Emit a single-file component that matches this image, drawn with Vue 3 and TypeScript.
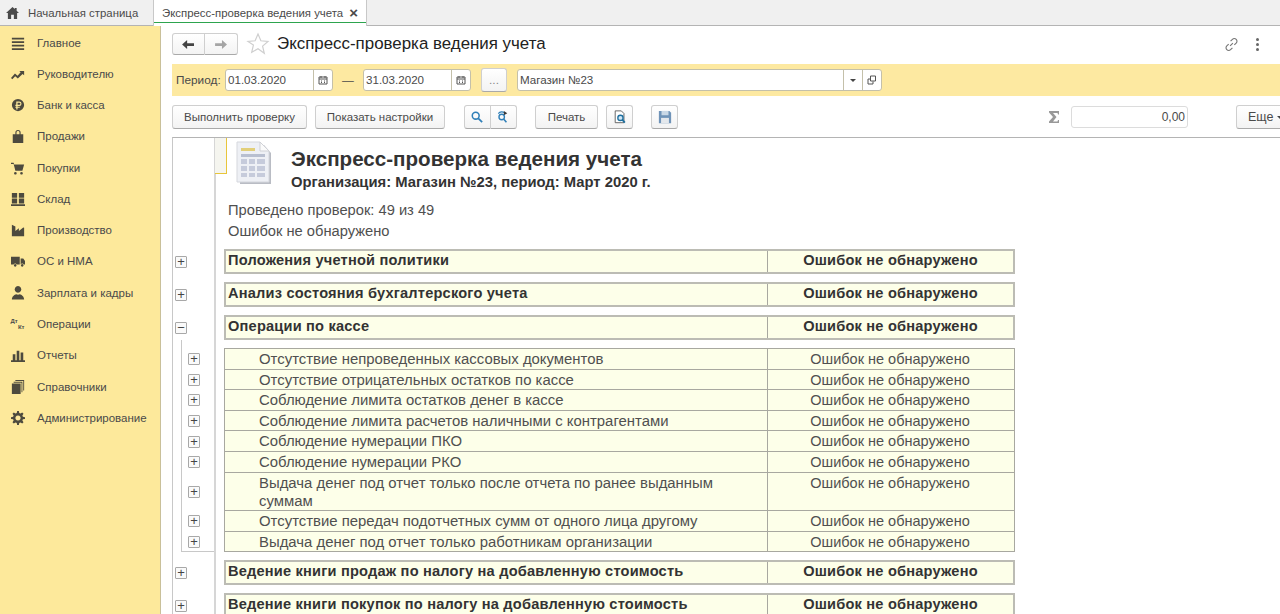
<script setup lang="ts">
interface NavItem {
  label: string
  icon: string
}

const navItems: NavItem[] = [
  { label: 'Главное', icon: 'M1 2h14v2H1zM1 6h14v2H1zM1 10h14v2H1zM1 14h14v2H1z' },
  { label: 'Руководителю', icon: 'M0 12.500l4.500-5 3 2.500 3.500-4-1.500-1.500H15v5l-1.800-1.600L7.800 13l-3-2.500-3.300 3.500z' },
  { label: 'Банк и касса', icon: 'M8 1a7 7 0 1 0 0 14A7 7 0 0 0 8 1zM6 4h3.500a2.500 2.500 0 0 1 0 5H7.500v1H10v1.200H7.500V13H6v-1.800H5V10h1V9H5V7.800h1zM7.500 5.300v2.500h2a1.250 1.250 0 0 0 0-2.500z' },
  { label: 'Продажи', icon: 'M2 6h3V4a3 3 0 0 1 6 0v2h3v10H2zM6.300 6h3.400V4a1.700 1.700 0 0 0-3.400 0z' },
  { label: 'Покупки', icon: 'M0 2h3l.6 2H15l-2 7H5L3 3.500H0zM5 12.500a1.500 1.500 0 1 0 .01 0zM12 12.500a1.500 1.500 0 1 0 .01 0z' },
  { label: 'Склад', icon: 'M1 1h6v5.500H1zM9 1h6v5.500H9zM1 7.500h6V13H1zM9 7.500h6V13H9zM0 14h16v2H0z' },
  { label: 'Производство', icon: 'M1 15V2l4 2v5l4-3v3l5-4 1 .5V15z' },
  { label: 'ОС и НМА', icon: 'M0 3h10v9H6.500a2 2 0 0 0-3.500 0H0zM11 5h3l2 3v4h-1.500a2 2 0 0 0-3.500 0zM4.800 11.500a1.500 1.500 0 1 0 .01 0zM12.800 11.500a1.500 1.500 0 1 0 .01 0z' },
  { label: 'Зарплата и кадры', icon: 'M8 0a3.800 3.800 0 1 1-.01 0zM1 15.500c0-3.500 3-5.500 5-6 1.300.6 2.700.6 4 0 2 .5 5 2.500 5 6z' },
  { label: 'Операции', icon: '' },
  { label: 'Отчеты', icon: 'M2 7h3v7H2zM6.500 3h3v11h-3zM11 5h3v9h-3zM0 14h16v2H0z' },
  { label: 'Справочники', icon: 'M1 4h10v12H1zM3 2h10v12h-1V3H3zM5 0h10v12h-1V1H5z' },
  { label: 'Администрирование', icon: 'M7 0h2l.4 2.300 1.500.6 1.900-1.300 1.500 1.500-1.300 1.900.6 1.500 2.400.5v2l-2.400.4-.6 1.500 1.300 1.900-1.500 1.500-1.900-1.300-1.500.6L9 16H7l-.4-2.400-1.500-.6-1.900 1.300-1.500-1.500L3 10.900l-.6-1.500L0 9V7l2.400-.5.6-1.500-1.300-1.900 1.500-1.500L5.100 2.900l1.500-.6zM8 5a3 3 0 1 0 .01 0z' },
]

const noErrors = 'Ошибок не обнаружено'

const checks: string[] = [
  'Отсутствие непроведенных кассовых документов',
  'Отсутствие отрицательных остатков по кассе',
  'Соблюдение лимита остатков денег в кассе',
  'Соблюдение лимита расчетов наличными с контрагентами',
  'Соблюдение нумерации ПКО',
  'Соблюдение нумерации РКО',
  'Выдача денег под отчет только после отчета по ранее выданным суммам',
  'Отсутствие передач подотчетных сумм от одного лица другому',
  'Выдача денег под отчет только работникам организации',
]

const topGroups = ['Положения учетной политики', 'Анализ состояния бухгалтерского учета']
const bottomGroups = [
  'Ведение книги продаж по налогу на добавленную стоимость',
  'Ведение книги покупок по налогу на добавленную стоимость',
]
</script>

<template>
  <div class="app">
    <div class="tabs">
      <div class="tab-home">
        <svg class="home-icon" viewBox="0 0 14 13"><path d="M7 0L0 6.500h2V13h3.500V8.500h3V13H12V6.500h2L11.500 4V1h-2v1.200z" /></svg>
        <span>Начальная страница</span>
      </div>
      <div class="tab-active">
        <span>Экспресс-проверка ведения учета</span>
        <span class="tab-close">×</span>
      </div>
    </div>

    <div class="main">
      <nav class="sidebar">
        <div v-for="item in navItems" :key="item.label" class="nav-item">
          <span class="nav-icon">
            <svg v-if="item.icon" viewBox="0 0 16 16"><path :d="item.icon" /></svg>
            <span v-else class="dt-kt"><b>Дт</b><b>Кт</b></span>
          </span>
          <span>{{ item.label }}</span>
        </div>
      </nav>

      <section class="content">
        <div class="head">
          <div class="btn-group nav-arrows">
            <button class="btn seg">
              <svg viewBox="0 0 14 12"><path d="M0 6l5.500-5v3.500H13v3H5.500V11z" fill="#444" /></svg>
            </button>
            <button class="btn seg">
              <svg viewBox="0 0 14 12"><path d="M13 6L7.500 1v3.500H0v3h7.500V11z" fill="#a5a5a5" /></svg>
            </button>
          </div>
          <svg class="star" viewBox="0 0 24 24"><path d="M12 2l2.900 6.800 7.100.6-5.400 4.700 1.700 7.200L12 16.700l-6.300 3.600 1.700-7.200L2 9.400l7.100-.6z" /></svg>
          <h1 class="title">Экспресс-проверка ведения учета</h1>
          <div class="head-tools">
            <svg class="link-icon" viewBox="0 0 16 16"><path d="M6.500 9.500l3-3M7 4.500l2-2a2.800 2.800 0 0 1 4 0 2.800 2.800 0 0 1 0 4l-2 2M9 11.500l-2 2a2.800 2.800 0 0 1-4 0 2.800 2.800 0 0 1 0-4l2-2" /></svg>
            <span class="dots"><i /><i /><i /></span>
          </div>
        </div>

        <div class="period">
          <span class="period-label">Период:</span>
          <div class="field date">
            <span class="field-text">01.03.2020</span>
            <span class="field-btn"><svg viewBox="0 0 10 10"><path d="M1 2h8v7H1zM1 4h8M3 1v2M7 1v2M3 6h1M6 6h1M3 7.500h1M6 7.500h1" /></svg></span>
          </div>
          <span class="dash">—</span>
          <div class="field date">
            <span class="field-text">31.03.2020</span>
            <span class="field-btn"><svg viewBox="0 0 10 10"><path d="M1 2h8v7H1zM1 4h8M3 1v2M7 1v2M3 6h1M6 6h1M3 7.500h1M6 7.500h1" /></svg></span>
          </div>
          <button class="btn ellipsis">...</button>
          <div class="field org">
            <span class="field-text">Магазин №23</span>
            <span class="field-btn"><i class="caret" /></span>
            <span class="field-btn"><svg viewBox="0 0 10 10"><path d="M3.500 1h5v5h-5zM1 4h2.500M1 4v5h5V6.500" /></svg></span>
          </div>
        </div>

        <div class="toolbar">
          <button class="btn text-btn run">Выполнить проверку</button>
          <button class="btn text-btn settings">Показать настройки</button>
          <div class="btn-group search-group">
            <button class="btn seg">
              <svg viewBox="0 0 14 14"><circle cx="5.500" cy="5.500" r="4" fill="none" stroke="#2f7fb8" stroke-width="1.800" /><path d="M8.500 8.500L13 13" stroke="#2f7fb8" stroke-width="2" /></svg>
            </button>
            <button class="btn seg">
              <svg viewBox="0 0 14 14"><circle cx="5.500" cy="7" r="3.200" fill="none" stroke="#2f7fb8" stroke-width="1.600" /><path d="M8 9.500l3 3.500" stroke="#2f7fb8" stroke-width="1.800" /><path d="M1.500 3A5 5 0 0 1 9 2.500" fill="none" stroke="#2f7fb8" stroke-width="1.300" /><path d="M8 0l4 2.500L8 5z" fill="#3a3a3a" /></svg>
            </button>
          </div>
          <button class="btn text-btn print">Печать</button>
          <button class="btn icon-btn preview">
            <svg viewBox="0 0 16 16"><path d="M2.500 1h7l3 3v10.500h-10z" fill="#fff" stroke="#555" /><circle cx="8.500" cy="9" r="3" fill="#cfe6f5" stroke="#1d6f9f" stroke-width="1.500" /><path d="M10.500 11l3 3.500" stroke="#1d6f9f" stroke-width="2" /></svg>
          </button>
          <button class="btn icon-btn save">
            <svg viewBox="0 0 16 16"><path d="M1 1h12l2 2v12H1z" fill="#6f93b8" /><path d="M4 1h8v5H4z" fill="#c9d8e6" /><path d="M3.500 9h9v6h-9z" fill="#e4e8ec" /></svg>
          </button>
          <svg class="sigma" viewBox="0 0 12 14"><path d="M1 1h10v3.500h-1L9.500 3H5l3.500 4L5 11.500h4.500l.5-1.500h1V13H1v-1.500L5 7 1 2.500z" /></svg>
          <div class="sum">0,00</div>
          <button class="btn text-btn more">Еще<i class="caret" /></button>
        </div>

        <div class="report">
          <div class="row">
            <div class="gutter" />
            <div class="intro">
              <div class="intro-head">
                <div class="corner" />
                <svg class="doc" viewBox="0 0 40 48">
                  <path d="M5 5h24l7 8v31H5z" fill="#b9bcc4" />
                  <path d="M2 2h23l9 9v31H2z" fill="#eef0f5" stroke="#d5d7dd" />
                  <path d="M25 2v9h9z" fill="#fbfbfb" stroke="#cfd1d6" />
                  <path d="M6 8h14v3H6z" fill="#e2cf7a" />
                  <path d="M6 14h24v3H6z" fill="#b8bfd0" />
                  <path d="M6 19h6v5H6zM14 19h6v5h-6zM22 19h8v5h-8zM6 26h6v5H6zM14 26h6v5h-6zM22 26h8v5h-8zM6 33h6v4H6zM14 33h6v4h-6zM22 33h8v4h-8z" fill="#c6cbdb" />
                </svg>
                <div class="intro-titles">
                  <div class="report-title">Экспресс-проверка ведения учета</div>
                  <div class="report-sub">Организация: Магазин №23, период: Март 2020 г.</div>
                </div>
              </div>
              <p class="summary">Проведено проверок: 49 из 49</p>
              <p class="summary">Ошибок не обнаружено</p>
            </div>
          </div>

          <template v-for="name in topGroups" :key="name">
            <div class="row">
              <div class="gutter"><span class="toggle">+</span></div>
              <div class="cells group"><div class="cell-name">{{ name }}</div><div class="cell-result">{{ noErrors }}</div></div>
            </div>
            <div class="row spacer"><div class="gutter" /></div>
          </template>

          <div class="row">
            <div class="gutter"><span class="toggle">−</span></div>
            <div class="cells group"><div class="cell-name">Операции по кассе</div><div class="cell-result">{{ noErrors }}</div></div>
          </div>
          <div class="row spacer"><div class="gutter"><div class="bracket" /></div></div>

          <div v-for="(check, i) in checks" :key="check" class="row">
            <div class="gutter">
              <div class="bracket" :class="{ last: i === checks.length - 1 }"><span class="toggle">+</span></div>
            </div>
            <div class="cells sub" :class="{ first: i === 0 }">
              <div class="cell-name">{{ check }}</div>
              <div class="cell-result">{{ noErrors }}</div>
            </div>
          </div>
          <div class="row spacer"><div class="gutter" /></div>

          <template v-for="name in bottomGroups" :key="name">
            <div class="row">
              <div class="gutter"><span class="toggle">+</span></div>
              <div class="cells group"><div class="cell-name">{{ name }}</div><div class="cell-result">{{ noErrors }}</div></div>
            </div>
            <div class="row spacer"><div class="gutter" /></div>
          </template>
        </div>
      </section>
    </div>
  </div>
</template>

<style>
html,
body {
  margin: 0;
  overflow: hidden;
}
</style>

<style scoped>
.app {
  display: flex;
  flex-direction: column;
  width: 1280px;
  height: 614px;
  overflow: hidden;
  background: #fff;
  font-family: "Liberation Sans", Arial, sans-serif;
  font-size: 11.5px;
  color: #4a4a4a;
}

.tabs {
  display: flex;
  flex: none;
  height: 25px;
  background: #f0f0f0;
  border-bottom: 1px solid #b4b4b4;
  font-size: 11.4px;
}

.tab-home {
  display: flex;
  align-items: center;
  width: 153px;
  padding-left: 6px;
  box-sizing: border-box;
}

.home-icon {
  width: 13px;
  height: 12px;
  margin-right: 9px;
  fill: #4a4a4a;
}

.tab-active {
  display: flex;
  align-items: center;
  width: 214px;
  height: 26px;
  padding: 0 0 1px 8px;
  box-sizing: border-box;
  background: #fff;
  border-left: 1px solid #c8c8c8;
  border-right: 1px solid #c8c8c8;
  box-shadow: inset 0 -3px 0 #fff, inset 0 -4px 0 #2da44e;
  white-space: nowrap;
}

.tab-close {
  margin-left: 6px;
  font-size: 15px;
  font-weight: 700;
  line-height: 1;
}

.main {
  display: flex;
  flex: 1;
  min-height: 0;
}

.sidebar {
  flex: none;
  width: 160px;
  padding-top: 1px;
  background: #fde99b;
  border-right: 1px solid #c9c09a;
}

.nav-item {
  display: flex;
  align-items: center;
  height: 31.27px;
  padding-left: 10px;
}

.nav-icon {
  display: flex;
  justify-content: center;
  width: 15px;
  margin-right: 12px;
}

.nav-icon svg {
  width: 14px;
  height: 14px;
  fill: #4d4a3e;
}

.dt-kt {
  display: flex;
  flex-direction: column;
  width: 14px;
  font-size: 6px;
  line-height: 6px;
}

.dt-kt b:last-child {
  align-self: flex-end;
}

.content {
  flex: 1;
  min-width: 0;
  padding: 7px 0 0 11px;
}

.head {
  display: flex;
  align-items: center;
  height: 22px;
}

.btn {
  display: flex;
  flex: none;
  align-items: center;
  justify-content: center;
  height: 24px;
  padding: 0;
  box-sizing: border-box;
  background: linear-gradient(#fff, #f3f3f3);
  border: 1px solid #cfcfcf;
  border-bottom-color: #a9a9a9;
  border-radius: 3px;
  font: inherit;
  color: inherit;
}

.btn-group {
  display: flex;
  flex: none;
}

.btn-group .seg:first-child {
  border-radius: 3px 0 0 3px;
}

.btn-group .seg:last-child {
  border-left: 0;
  border-radius: 0 3px 3px 0;
}

.nav-arrows .seg {
  width: 33px;
  height: 22px;
}

.nav-arrows svg {
  width: 13px;
  height: 11px;
}

.star {
  width: 24px;
  height: 24px;
  margin-left: 8px;
  fill: #fff;
  stroke: #cfcfcf;
  stroke-width: 1.2;
}

.title {
  margin: 0 0 0 7px;
  font-size: 16.9px;
  font-weight: 400;
  color: #222;
}

.head-tools {
  display: flex;
  align-items: center;
  margin-left: auto;
  margin-right: 21px;
}

.link-icon {
  width: 15px;
  height: 15px;
  fill: none;
  stroke: #777;
  stroke-width: 1.2;
}

.dots {
  display: flex;
  flex-direction: column;
  gap: 2px;
  margin-left: 17px;
}

.dots i {
  display: block;
  width: 3px;
  height: 3px;
  background: #666;
  border-radius: 50%;
}

.period {
  display: flex;
  align-items: center;
  height: 32px;
  margin-top: 9px;
  padding-left: 4px;
  background: #fde9a1;
  font-size: 11.8px;
}

.period-label {
  width: 49px;
}

.field {
  display: flex;
  align-items: stretch;
  height: 22px;
  box-sizing: border-box;
  background: #fff;
  border: 1px solid #c4c0aa;
  border-radius: 3px;
  font-size: 11.6px;
}

.field-text {
  flex: 1;
  padding-left: 2px;
  line-height: 20px;
}

.field-btn {
  display: flex;
  align-items: center;
  justify-content: center;
  width: 18px;
  border-left: 1px solid #c4c0aa;
}

.field-btn svg {
  width: 10px;
  height: 10px;
  fill: none;
  stroke: #555;
}

.date {
  width: 108px;
}

.dash {
  width: 30px;
  text-align: center;
}

.ellipsis {
  width: 26px;
  margin-left: 10px;
  color: #888;
}

.org {
  width: 365px;
  margin-left: 10px;
}

.caret {
  width: 0;
  height: 0;
  border: 3px solid transparent;
  border-top: 3px solid #444;
  border-bottom: 0;
}

.toolbar {
  display: flex;
  align-items: center;
  height: 24px;
  margin-top: 9px;
}

.run {
  width: 135px;
}

.settings {
  width: 130px;
  margin-left: 8px;
}

.search-group {
  margin-left: 19px;
}

.search-group .seg {
  width: 26.5px;
}

.search-group svg {
  width: 12px;
  height: 12px;
}

.print {
  width: 63px;
  margin-left: 18px;
}

.icon-btn {
  width: 27px;
}

.icon-btn svg {
  width: 14px;
  height: 14px;
}

.preview {
  margin-left: 8px;
}

.save {
  margin-left: 18px;
}

.sigma {
  flex: none;
  width: 12px;
  height: 14px;
  margin-left: 370px;
  fill: #999;
}

.sum {
  width: 117px;
  height: 22px;
  margin-left: 11px;
  padding-right: 2px;
  box-sizing: border-box;
  flex: none;
  border: 1px solid #dcdcdc;
  border-radius: 3px;
  font-size: 12px;
  line-height: 20px;
  text-align: right;
}

.more {
  width: 60px;
  margin-left: 48px;
  padding-left: 11px;
  justify-content: flex-start;
  font-size: 12.5px;
}

.more .caret {
  margin-left: 4px;
}

.report {
  margin-top: 8px;
  height: 600px;
  border-top: 1px solid #b4b4b4;
  border-left: 1px solid #c8c8c8;
  color: #505050;
}

.row {
  display: flex;
}

.spacer {
  height: 8px;
}

.gutter {
  display: flex;
  flex: none;
  align-items: center;
  width: 43px;
  margin-right: 8px;
  padding-left: 2px;
  box-sizing: border-box;
  border-right: 2px solid #d6d6d6;
}

.toggle {
  display: block;
  width: 12px;
  height: 12px;
  box-sizing: border-box;
  border: 1px solid #a8a8a8;
  border-radius: 1px;
  background: #fafafa;
  font-size: 13px;
  line-height: 9px;
  text-align: center;
  color: #444;
}

.bracket {
  display: flex;
  flex: 1;
  align-self: stretch;
  align-items: center;
  margin: 0 0 0 6px;
  padding-left: 6px;
  border-left: 1px solid #c8c8c8;
}

.bracket.last {
  border-bottom: 1px solid #c8c8c8;
}

.cells {
  display: flex;
  flex: none;
  width: 791px;
  box-sizing: border-box;
  background: #fdffe9;
  border: 1px solid #a8a8a0;
  border-top: 0;
}

.cell-name {
  flex: 1;
  padding-left: 2px;
}

.cell-result {
  flex: none;
  width: 246px;
  box-sizing: border-box;
  border-left: 1px solid #a8a8a0;
  text-align: center;
}

.group {
  height: 25px;
  border: 2px solid #bcbcb4;
  font-size: 14.6px;
  font-weight: 700;
  line-height: 19px;
  letter-spacing: 0.2px;
  color: #333;
}

.sub {
  font-size: 14.5px;
  line-height: 18px;
}

.sub .cell-name {
  padding: 1px 50px 0.6px 34px;
  font-size: 14.9px;
}

.sub .cell-result {
  width: 247px;
  padding: 1px 2px 0 0;
}

.sub.first {
  border-top: 1px solid #a8a8a0;
}

.intro {
  height: 111px;
}

.intro-head {
  display: flex;
  height: 62px;
}

.corner {
  flex: none;
  width: 11px;
  height: 35px;
  margin-left: -9px;
  background: #f5f5ef;
  border-right: 1px solid #e8c53a;
  border-bottom: 1px solid #e8c53a;
}

.doc {
  flex: none;
  width: 40px;
  height: 48px;
  margin: 2px 0 0 8px;
}

.intro-titles {
  margin-left: 16px;
}

.report-title {
  margin-top: 9px;
  font-size: 20.6px;
  font-weight: 700;
  line-height: 24px;
  color: #333;
}

.report-sub {
  margin-top: 2px;
  font-size: 14.8px;
  font-weight: 700;
  line-height: 18px;
  color: #333;
}

.summary {
  margin: 0 0 0 4px;
  font-size: 14.7px;
  line-height: 20.5px;
}
</style>
